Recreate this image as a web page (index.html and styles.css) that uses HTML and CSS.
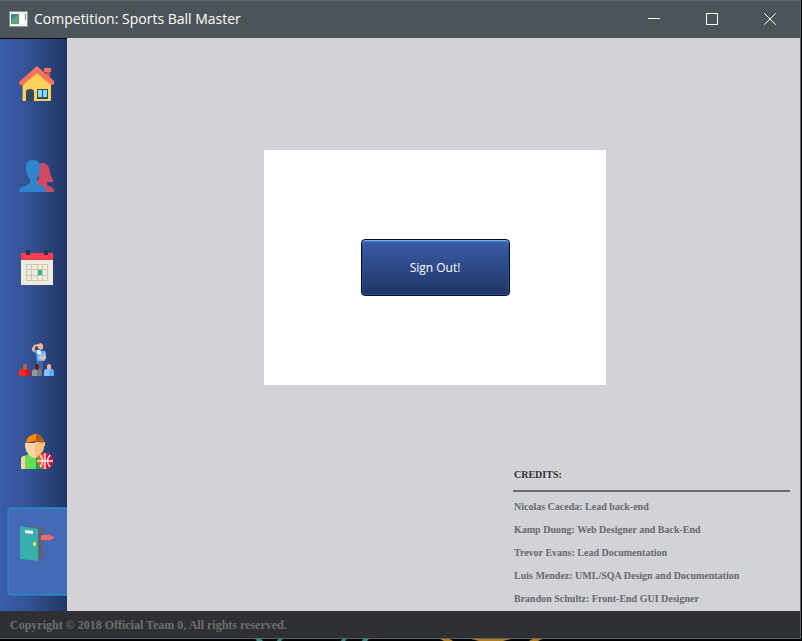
FILE: index.html
```html
<!DOCTYPE html>
<html lang="en">
<head>
<meta charset="utf-8">
<title>Competition: Sports Ball Master</title>
<link rel="stylesheet" href="styles.css">
</head>
<body>
<div class="window">
  <header class="titlebar">
    <svg class="app-icon" viewBox="0 0 19 16" aria-hidden="true">
      <rect width="19" height="16" fill="#8c9292"/>
      <rect x="1" y="1" width="17" height="14" fill="#f0f1f0"/>
      <rect x="2" y="3" width="8" height="10" fill="#4a7f94"/>
      <path d="M2 13V9l8-6v10z" fill="#5ba37f"/>
      <rect x="11" y="3" width="4" height="10" fill="#fff"/>
      <path d="M16 3h1v6h-1z" fill="#5d9c86"/>
    </svg>
    <h1 class="title">Competition: Sports Ball Master</h1>
    <div class="controls">
      <button type="button" class="control" aria-label="Minimize"><svg viewBox="0 0 12 12"><path d="M0 5.5h12"/></svg></button>
      <button type="button" class="control" aria-label="Maximize"><svg viewBox="0 0 12 12"><path d="M.5.5h11v11H.5z"/></svg></button>
      <button type="button" class="control" aria-label="Close"><svg viewBox="0 0 12 12"><path d="M.3.3l11.4 11.4M11.7.3L.3 11.7"/></svg></button>
    </div>
  </header>
  <div class="body">
    <nav class="sidebar">
      <button type="button" class="nav-item" aria-label="Home">
        <svg viewBox="0 0 36 36">
          <path d="M27 5h4v12h-4z" fill="#dd4f43"/><path d="M25 2h7v4h-7z" fill="#f4725e"/>
          <path d="M4 16L18 5l14 11v19H4z" fill="#ffd05b"/>
          <path d="M3 18h1v17H3z" fill="#8c8585"/>
          <path d="M4 20L18 8l14 12v-4L18 4 4 16z" fill="#efb343"/>
          <path d="M18 0L0 16v2l2 1h1L18 7l15 12h1l1-1v-3z" fill="#f4725e"/>
          <path d="M7 35V26q0-3 4-3t4 3v9z" fill="#324a5e"/>
          <path d="M18 23h11v10H18z" fill="#324a5e"/><path d="M19 24h4v7h-4zM24 24h4v7h-4z" fill="#84dbff"/>
        </svg>
      </button>
      <button type="button" class="nav-item" aria-label="Teams">
        <svg viewBox="0 0 36 36">
          <path d="M20 6q4-2 7 0 3 2 4 8 1 5 3 8v2h-6v3l4 2q3 1 3 5H23l-6-10 3-3z" fill="#cf4a64"/>
          <path d="M7 7q1-5 7-5t7 5v5l-1 5-2 4v3q0 2 3 3l4 2q2 1 2 5H0q0-4 3-5l5-2q3-1 3-3v-3l-3-4-1-5z" fill="#3084cc"/>
        </svg>
      </button>
      <button type="button" class="nav-item" aria-label="Calendar">
        <svg viewBox="0 0 36 36">
          <path d="M2 3h32v32H2z" fill="#efebde"/><path d="M2 3h32v6H2z" fill="#ff3b54"/><path d="M2 9h32v1H2z" fill="#d5454e"/>
          <path d="M7 0h4v5H7zM25 0h4v5h-4z" fill="#28394c"/>
          <path d="M7 14h22v17H7z" fill="#ccc8aa"/>
          <path d="M8 15h4v4H8zM13 15h5v4h-5zM19 15h4v4h-4zM24 15h4v4h-4zM8 20h4v5H8zM13 20h5v5h-5zM24 20h4v5h-4zM8 26h4v4H8zM13 26h5v4h-5zM19 26h4v4h-4zM24 26h4v4h-4z" fill="#efebde"/>
          <path d="M19 20h4v5h-4z" fill="#26b99a"/>
        </svg>
      </button>
      <button type="button" class="nav-item" aria-label="Coach">
        <svg viewBox="0 0 36 36">
          <path d="M18 19h6v9h-6z" fill="#4a66a4"/><path d="M18 19h2v7h-2z" fill="#637caf"/>
          <path d="M17 8l9 1v10h-8l-1-8-3-1 1-2z" fill="#5baeff"/>
          <path d="M26 9q1 1 1 5h-2v4h-5l-1-3z" fill="#8abff5"/><path d="M19 9h3v4l-3-1z" fill="#fff"/>
          <path d="M18 8h3v3h-3z" fill="#e2edf7"/>
          <path d="M19 2l3-1 2 2v4l-3 1-2-2-1-2-2 1v3l-2 2-1-2V6l2-3z" fill="#f5af9b"/>
          <path d="M25 13l2 1v3l-3 1-4-2 1-2 4 1z" fill="#f3bba8"/>
          <path d="M0 34v-4q0-3 3-3h5q3 0 3 4v3z" fill="#ff2719"/><path d="M6 27h3q2 1 2 7H6z" fill="#d51322"/>
          <path d="M13 34v-4q0-3 3-3h4q3 0 3 4v3z" fill="#969696"/><path d="M18 27h3l2 3v4h-5z" fill="#777b81"/>
          <path d="M25 34v-4q0-3 3-3h4q3 0 3 4v3z" fill="#85c4ff"/><path d="M30 27h3q2 1 2 7h-5z" fill="#5bacf9"/>
          <path d="M4 24q0-2 2-2t2 2v3q-2 2-4 0z" fill="#b66549"/>
          <path d="M16 24q0-2 2-2t2 2v3q-2 2-4 0z" fill="#5b2215"/>
          <path d="M28 24q0-2 2-2t2 2v3q-2 2-4 0z" fill="#f7b09a"/>
        </svg>
      </button>
      <button type="button" class="nav-item" aria-label="Players">
        <svg viewBox="0 0 36 36">
          <path d="M2 35V25q0-3 3-3l7-2h9l7 4v11z" fill="#ffd1a0"/>
          <path d="M6 22l4-2q6 7 10 0l4 3v12H6z" fill="#66de58"/><path d="M16 24q3 0 5-4l4 3v12h-9z" fill="#00ad62"/>
          <path d="M6 22v13h11V24q-4 0-7-4z" fill="#66de58"/>
          <path d="M6 9h20v3h-1l-1 5-4 4-4 3-5-2-4-5-1-5z" fill="#ffd4a4"/>
          <path d="M16 8h10v4h-1l-1 5-4 4-4 2z" fill="#ffc07d"/>
          <path d="M7 9q1-7 6-8l2-1h3q6 2 7 9l-9-2z" fill="#ff8a00"/><path d="M17 0q7 1 7 9l-7-2z" fill="#b65b12"/>
          <circle cx="26" cy="27" r="8" fill="#ff5128"/>
          <path d="M26 19a8 8 0 0 1 0 16z" fill="#e00b35"/>
          <path d="M26 19v16M18 27h16M21 21q5 6 0 12M31 21q-5 6 0 12" fill="none" stroke="#eeece9" stroke-width="1.5"/>
        </svg>
      </button>
      <button type="button" class="nav-item active" aria-label="Sign out" aria-current="page">
        <svg viewBox="0 0 36 36">
          <path d="M4 1h20v32H4z" fill="#5d6370"/>
          <path d="M1 0l18 3v32L1 33z" fill="#37afad"/>
          <path d="M6 4l8 1v3L6 7z" fill="#fff"/>
          <path d="M15 16h1l1 1v2l-1 1h-1l-1-1v-2z" fill="#ffec42"/>
          <path d="M22 9h7V8l6 3v1l-6 3v-1h-7z" fill="#f06868"/>
        </svg>
      </button>
    </nav>
    <main class="content">
      <section class="card"><button type="button" class="sign-out">Sign Out!</button></section>
      <section class="credits">
        <h2>CREDITS:</h2>
        <ul>
          <li>Nicolas Caceda: Lead back-end</li>
          <li>Kamp Duong: Web Designer and Back-End</li>
          <li>Trevor Evans: Lead Documentation</li>
          <li>Luis Mendez: UML/SQA Design and Documentation</li>
          <li>Brandon Schultz: Front-End GUI Designer</li>
        </ul>
      </section>
    </main>
  </div>
  <footer class="footer">Copyright © 2018 Official Team 0, All rights reserved.</footer>
</div>
<svg class="desktop" width="802" height="2" viewBox="0 0 802 2" aria-hidden="true">
  <path d="M255 0h6l2 2h-6zM278 0h5l-2 2h-4zM342 0h5l-2 2h-4zM363 0h6l-2 2h-5z" fill="#3f8584"/>
  <path d="M440 0h10l3 2h-9zM471 0h40l-8 2h-24zM532 0h10l-4 2h-9z" fill="#b47f1c"/>
</svg>
</body>
</html>
```
FILE: styles.css
```css
* { box-sizing: border-box; }

body {
  margin: 0;
  height: 100vh;
  display: flex;
  flex-direction: column;
  overflow: hidden;
  background: #000;
}

button { font: inherit; padding: 0; border: 0; background: none; color: inherit; }

.window {
  flex: 1;
  min-height: 0;
  display: flex;
  flex-direction: column;
  margin-right: 1px;
  border: solid #596269;
  border-width: 1px 1px 1px 0;
}

.titlebar {
  height: 37px;
  flex: none;
  display: flex;
  align-items: center;
  gap: 6px;
  padding: 0 1px 1px 9px;
  background: #4b5459;
  color: #fff;
}

.app-icon { width: 19px; height: 16px; }

.title {
  flex: 1;
  margin: 0;
  font: 400 14px/20px "Open Sans", "Noto Sans", sans-serif;
}

.controls { display: flex; height: 100%; }

.control { width: 58px; display: grid; place-items: center; }

.control svg { width: 12px; height: 12px; fill: none; stroke: #fff; }

.body { flex: 1; min-height: 0; display: flex; }

.sidebar {
  width: 67px;
  flex: none;
  display: flex;
  flex-direction: column;
  gap: 3px;
  padding: 8px 0 0 7px;
  overflow: hidden;
  border-top: 1px solid #000;
  background: linear-gradient(to right, #395cab, #365599 35%, #213665);
}

.nav-item {
  width: 76px;
  height: 89px;
  flex: none;
  display: flex;
  padding: 19px 12px;
  border-radius: 4px;
}

.nav-item svg { width: 36px; height: 36px; }

.nav-item.active {
  padding: 18px 11px;
  border: 1px solid #3273b8;
  background: #446ab6;
  box-shadow: inset 0 0 0 1px #188fcb;
}

.content {
  flex: 1;
  display: flex;
  flex-direction: column;
  padding: 112px 10px 1px 13px;
  background: #d2d3d7;
}

.card {
  width: 342px;
  height: 235px;
  align-self: center;
  display: grid;
  place-items: center;
  background: #fff;
}

.sign-out {
  width: 149px;
  height: 57px;
  border: 1px solid #000b22;
  border-radius: 4px;
  background: linear-gradient(#395cab, #213665);
  box-shadow: inset 0 1px #6eb5f0, inset 0 2px #4680cb, inset 0 0 0 1px #25509b;
  color: #fff;
  font: 400 12px/16px "Open Sans", "Noto Sans", sans-serif;
}

.credits {
  width: 277px;
  margin-top: auto;
  align-self: flex-end;
  color: #69696b;
  font: 700 10px/23px "Liberation Serif", serif;
}

.credits h2 {
  margin: 0 0 3px;
  padding: 0 1px 4px;
  border-bottom: 2px solid #6a6b6f;
  color: #303134;
  font: inherit;
}

.credits ul { margin: 0; padding: 0 1px; list-style: none; }

.footer {
  height: 27px;
  flex: none;
  padding: 1px 0 0 10px;
  background: #2e3034;
  color: #6f6d6b;
  font: 700 12px/26px "Liberation Serif", serif;
}

.desktop { flex: none; display: block; }
```
